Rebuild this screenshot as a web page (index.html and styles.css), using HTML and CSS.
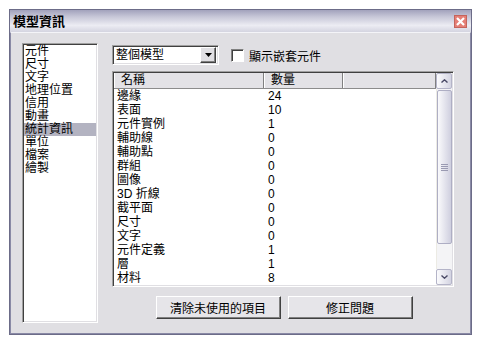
FILE: index.html
```html
<!DOCTYPE html>
<html>
<head>
<meta charset="utf-8">
<link rel="stylesheet" href="styles.css">
</head>
<body>
<div class="window">
  <div class="titlebar">
    <span class="title">模型資訊</span>
    <span class="close"><svg width="9" height="9" viewBox="0 0 9 9"><path d="M1 1L8 8M8 1L1 8" stroke="#fff" stroke-width="2.2"/></svg></span>
  </div>
  <div class="content">
    <div class="sidebar">
      <div class="item">元件</div>
      <div class="item">尺寸</div>
      <div class="item">文字</div>
      <div class="item">地理位置</div>
      <div class="item">信用</div>
      <div class="item">動畫</div>
      <div class="item selected">統計資訊</div>
      <div class="item">單位</div>
      <div class="item">檔案</div>
      <div class="item">繪製</div>
    </div>
    <div class="main">
      <div class="toolbar">
        <div class="select">
          <span class="select-text">整個模型</span>
          <span class="select-btn"><svg width="7" height="4" viewBox="0 0 7 4"><path d="M0 0H7L3.5 4Z" fill="#000"/></svg></span>
        </div>
        <label class="check"><span class="box"></span><span>顯示嵌套元件</span></label>
      </div>
      <div class="table">
        <div class="grid">
          <div class="header">
            <div class="hcell c1">名稱</div>
            <div class="hcell c2">數量</div>
            <div class="hcell c3"></div>
          </div>
          <div class="rows">
            <div class="row"><span class="c1">邊緣</span><span class="c2">24</span></div>
            <div class="row"><span class="c1">表面</span><span class="c2">10</span></div>
            <div class="row"><span class="c1">元件實例</span><span class="c2">1</span></div>
            <div class="row"><span class="c1">輔助線</span><span class="c2">0</span></div>
            <div class="row"><span class="c1">輔助點</span><span class="c2">0</span></div>
            <div class="row"><span class="c1">群組</span><span class="c2">0</span></div>
            <div class="row"><span class="c1">圖像</span><span class="c2">0</span></div>
            <div class="row"><span class="c1">3D 折線</span><span class="c2">0</span></div>
            <div class="row"><span class="c1">截平面</span><span class="c2">0</span></div>
            <div class="row"><span class="c1">尺寸</span><span class="c2">0</span></div>
            <div class="row"><span class="c1">文字</span><span class="c2">0</span></div>
            <div class="row"><span class="c1">元件定義</span><span class="c2">1</span></div>
            <div class="row"><span class="c1">層</span><span class="c2">1</span></div>
            <div class="row"><span class="c1">材料</span><span class="c2">8</span></div>
          </div>
        </div>
        <div class="scrollbar">
          <div class="sbtn"><svg width="7" height="4" viewBox="0 0 7 4"><path d="M0.5 3.5L3.5 0.8L6.5 3.5" fill="none" stroke="#4a4a66" stroke-width="1.4"/></svg></div>
          <div class="track">
            <div class="thumb"><span class="grip"></span></div>
          </div>
          <div class="sbtn"><svg width="7" height="4" viewBox="0 0 7 4"><path d="M0.5 0.5L3.5 3.2L6.5 0.5" fill="none" stroke="#4a4a66" stroke-width="1.4"/></svg></div>
        </div>
      </div>
      <div class="buttons">
        <button class="btn">清除未使用的項目</button>
        <button class="btn">修正問題</button>
      </div>
    </div>
  </div>
</div>
</body>
</html>
```
FILE: styles.css
```css
* { box-sizing: border-box; }
html, body { margin: 0; padding: 0; background: #fff; }
body {
  font-family: "Liberation Sans", "Noto Sans CJK TC", sans-serif;
  font-size: 12px;
  color: #000;
}
.window {
  margin: 9px 0 0 9px;
  width: 463px;
  height: 326px;
  border: 1px solid #6c6c88;
  background: #e0dfe3;
  display: flex;
  flex-direction: column;
}
.titlebar {
  height: 22px;
  display: flex;
  align-items: center;
  justify-content: space-between;
  padding: 0 4px 0 3px;
  background: linear-gradient(#a2a2bc 0%, #c6c6d7 30%, #ececf3 70%, #d4d4e0 100%);
}
.title {
  font-weight: bold;
  font-size: 13px;
  line-height: 15px;
}
.close {
  width: 13px;
  height: 13px;
  background: #e57f76;
  border: 1px solid #c4645c;
  display: flex;
  align-items: center;
  justify-content: center;
}
.content {
  flex: 1;
  display: flex;
  padding: 10px 16px 10px 11px;
  gap: 14px;
  border: 1px solid #8a8aa6;
  border-top: 1px solid #f4f4f8;
}
.sidebar {
  width: 76px;
  background: #fff;
  border: 1px solid;
  border-color: #a0a0a0 #fff #fff #a0a0a0;
  box-shadow: inset 1px 1px 0 #404040, inset -1px -1px 0 #e0dfe3;
  padding: 1px;
}
.item {
  height: 13px;
  line-height: 13px;
  padding-left: 1px;
  white-space: nowrap;
}
.item.selected { background: #b3b3c1; }
.main {
  width: 342px;
  display: flex;
  flex-direction: column;
  padding-top: 2px;
}
.toolbar {
  display: flex;
  align-items: center;
  height: 20px;
}
.select {
  width: 107px;
  height: 20px;
  background: #fff;
  border: 1px solid;
  border-color: #a0a0a0 #fff #fff #a0a0a0;
  box-shadow: inset 1px 1px 0 #404040, inset -1px -1px 0 #e0dfe3;
  display: flex;
  align-items: center;
  justify-content: space-between;
  padding: 2px;
}
.select-text { padding-left: 1px; line-height: 14px; }
.select-btn {
  width: 16px;
  height: 16px;
  background: #e0dfe3;
  border: 1px solid;
  border-color: #fff #404040 #404040 #fff;
  box-shadow: inset -1px -1px 0 #808080;
  display: flex;
  align-items: center;
  justify-content: center;
}
.check {
  display: flex;
  align-items: center;
  margin-left: 12px;
  gap: 5px;
}
.box {
  width: 13px;
  height: 13px;
  background: #fff;
  border: 1px solid;
  border-color: #808080 #fff #fff #808080;
  box-shadow: inset 1px 1px 0 #404040;
}
.table {
  margin-top: 6px;
  height: 216px;
  display: flex;
  background: #fff;
  border: 1px solid;
  border-color: #a0a0a0 #fff #fff #a0a0a0;
  box-shadow: inset 1px 1px 0 #404040, inset -1px -1px 0 #e0dfe3;
  padding: 1px;
}
.grid { flex: 1; display: flex; flex-direction: column; }
.header {
  height: 16px;
  display: flex;
  background: #e3e2e6;
  border-bottom: 1px solid #8c8c8c;
}
.hcell {
  line-height: 15px;
  padding-left: 6px;
  border-left: 1px solid #fff;
  border-right: 1px solid #808080;
}
.c1 { width: 150px; }
.c2 { width: 79px; }
.c3 { flex: 1; }
.rows { flex: 1; }
.row {
  height: 14px;
  line-height: 14px;
  display: flex;
}
.row .c1 { padding-left: 3px; }
.row .c2 { padding-left: 4px; }
.scrollbar {
  width: 16px;
  display: flex;
  flex-direction: column;
  background: #f4f4f6;
}
.sbtn {
  height: 16px;
  border: 1px solid #b4b4c8;
  border-radius: 2px;
  background: linear-gradient(90deg, #fbfbfd, #d4d4e2);
  display: flex;
  align-items: center;
  justify-content: center;
}
.track {
  flex: 1;
  padding: 1px 0 25px 0;
  display: flex;
  border-left: 1px solid #ecebe4;
}
.thumb {
  flex: 1;
  border: 1px solid #aeaec4;
  border-radius: 2px;
  background: linear-gradient(90deg, #fafafc, #cfcfdf);
  display: flex;
  align-items: center;
  justify-content: center;
}
.grip {
  width: 7px;
  height: 7px;
  background: repeating-linear-gradient(#9a9ab2 0 1px, transparent 1px 2px);
}
.buttons {
  margin-top: 9px;
  display: flex;
  justify-content: center;
  gap: 7px;
  padding-left: 2px;
}
.btn {
  width: 125px;
  height: 23px;
  font-family: inherit;
  font-size: 12px;
  background: #e6e5e9;
  border: 1px solid;
  border-color: #fff #404040 #404040 #fff;
  box-shadow: inset -1px -1px 0 #808080;
  padding: 0;
  color: #000;
}
```
